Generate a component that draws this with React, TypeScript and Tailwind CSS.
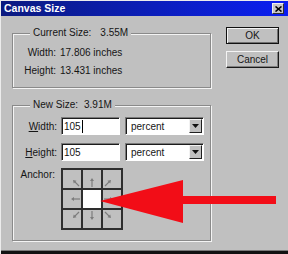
const font = { fontFamily: '"Liberation Sans", Arial, sans-serif' };

type Seg = [number, number, number, number] | null;

const anchorArrows: Seg[] = [
  [16, 16, 10, 10],
  [9, 17, 9, 8],
  [2, 16, 8, 10],
  [17, 9, 8, 9],
  null,
  [1, 9, 10, 9],
  [16, 2, 10, 8],
  [9, 1, 9, 10],
  [2, 2, 8, 8],
];

function SmallArrow({ seg }: { seg: [number, number, number, number] }) {
  const [x1, y1, x2, y2] = seg;
  const len = Math.hypot(x2 - x1, y2 - y1);
  const ux = (x2 - x1) / len;
  const uy = (y2 - y1) / len;
  const px = -uy;
  const py = ux;
  const head = `${x2},${y2} ${x2 - 3 * ux + 2 * px},${y2 - 3 * uy + 2 * py} ${x2 - 3 * ux - 2 * px},${y2 - 3 * uy - 2 * py}`;
  return (
    <svg width="18" height="18" viewBox="0 0 18 18">
      <line x1={x1} y1={y1} x2={x2 - 2 * ux} y2={y2 - 2 * uy} stroke="#7c7c7c" strokeWidth="1.2" />
      <polygon points={head} fill="#7c7c7c" />
    </svg>
  );
}

function GroupBox({ title, value, valueGap, className, children }: { title: string; value: string; valueGap: string; className: string; children: React.ReactNode }) {
  return (
    <div className={`relative border border-[#8a8a8a] shadow-[inset_1px_1px_0_#f4f4f4,1px_1px_0_#f4f4f4] ${className}`}>
      <span className="absolute left-[17px] top-[-7px] bg-[#c0c0c0] px-[3px] text-[10px] leading-[12px] text-[#151515] whitespace-nowrap">
        {title}
        <span className={valueGap}>{value}</span>
      </span>
      {children}
    </div>
  );
}

function Sunken({ className, children }: { className: string; children?: React.ReactNode }) {
  return (
    <div className={`relative flex items-center bg-white border border-[#7a7a7a] border-b-white border-r-white shadow-[inset_1px_1px_0_#1c1c1c] ${className}`}>
      {children}
    </div>
  );
}

function UnitSelect() {
  return (
    <Sunken className="w-[79px] h-[18px] ml-[5px] pl-[5px] pr-[1px]">
      <span className="flex-1 text-[10px] text-[#151515]">percent</span>
      <div className="w-[13px] h-[14px] bg-[#c0c0c0] flex items-center justify-center border border-[#f2f2f2] border-b-[#202020] border-r-[#202020]">
        <svg width="7" height="4" viewBox="0 0 7 4">
          <polygon points="0,0 7,0 3.5,4" fill="#111" />
        </svg>
      </div>
    </Sunken>
  );
}

export default function App() {
  return (
    <div
      className="relative w-[288px] h-[254px] bg-[#c0c0c0] border-t border-l border-[#ececec] flex flex-col overflow-hidden"
      style={font}
    >
      {/* title bar */}
      <div className="h-[15px] flex items-center pl-[3px] pr-[4px] bg-gradient-to-r from-[#0b1a80] to-[#0a1ef2]">
        <span className="flex-1 text-white font-bold text-[10.5px] leading-none">Canvas Size</span>
        <div className="w-[12px] h-[11px] bg-[#c6c6c6] border border-[#f0f0f0] border-b-[#303030] border-r-[#303030] flex items-center justify-center">
          <svg width="7" height="6" viewBox="0 0 7 6">
            <path d="M0.5 0.5 L6.5 5.5 M6.5 0.5 L0.5 5.5" stroke="#000" strokeWidth="1.6" />
          </svg>
        </div>
      </div>

      <div className="flex-1 flex pl-[11px]">
        <div className="w-[199px] flex flex-col">
          <GroupBox title="Current Size:" value="3.55M" valueGap="ml-[9px]" className="mt-[17px] h-[55px]">
            <div className="grid grid-cols-[43px_auto] gap-x-[4px] gap-y-[2px] pt-[11px] text-[10px] leading-[16px] text-[#151515]">
              <span className="text-right">Width:</span>
              <span>17.806 inches</span>
              <span className="text-right">Height:</span>
              <span>13.431 inches</span>
            </div>
          </GroupBox>

          <GroupBox title="New Size:" value="3.91M" valueGap="ml-[6px]" className="mt-[17px] h-[136px]">
            <div className="pt-[11px] text-[10px] text-[#151515]">
              <div className="flex items-center h-[18px]">
                <span className="w-[44px] mr-[4px] text-right">
                  <u>W</u>idth:
                </span>
                <Sunken className="w-[59px] h-[18px] pl-[2px]">
                  <span>105</span>
                  <span className="w-[1px] h-[13px] bg-black ml-[1px]" />
                </Sunken>
                <UnitSelect />
              </div>
              <div className="flex items-center h-[18px] mt-[8px]">
                <span className="w-[44px] mr-[4px] text-right">
                  <u>H</u>eight:
                </span>
                <Sunken className="w-[59px] h-[18px] pl-[2px]">
                  <span>105</span>
                </Sunken>
                <UnitSelect />
              </div>
              <div className="flex items-start mt-[7px]">
                <span className="w-[42px] mr-[6px] text-right leading-[12px] mt-[1px]">Anchor:</span>
                <div className="grid grid-cols-[18px_18px_18px] grid-rows-[18px_18px_18px] gap-[2px] p-[2px] bg-[#2e2e2e]">
                  {anchorArrows.map((seg, i) => (
                    <div key={i} className={seg ? "bg-[#c0c0c0]" : "bg-white"}>
                      {seg && <SmallArrow seg={seg} />}
                    </div>
                  ))}
                </div>
              </div>
            </div>
          </GroupBox>
        </div>

        <div className="ml-[15px] flex flex-col">
          <button className="mt-[11px] w-[53px] h-[17px] bg-[#c0c0c0] border border-[#111] shadow-[inset_1px_1px_0_#f4f4f4,inset_-1px_-1px_0_#707070] text-[10px] text-[#151515] leading-none">
            OK
          </button>
          <button className="mt-[7px] w-[53px] h-[17px] bg-[#c0c0c0] border border-[#f4f4f4] border-b-[#1a1a1a] border-r-[#1a1a1a] shadow-[inset_-1px_-1px_0_#808080] text-[10px] text-[#151515] leading-none">
            Cancel
          </button>
        </div>
      </div>

      <div className="h-[1px] bg-[#7a7a7a]" />
      <div className="h-[3px] bg-[#121212]" />

      {/* red pointer overlaid on the dialog */}
      <svg className="absolute left-[-1px] top-[-1px] pointer-events-none" width="288" height="254" viewBox="0 0 288 254">
        <polygon
          points="100,201 183,180 183,196 276,196 276,204 183,204 183,223"
          fill="#f20d17"
        />
      </svg>
    </div>
  );
}
